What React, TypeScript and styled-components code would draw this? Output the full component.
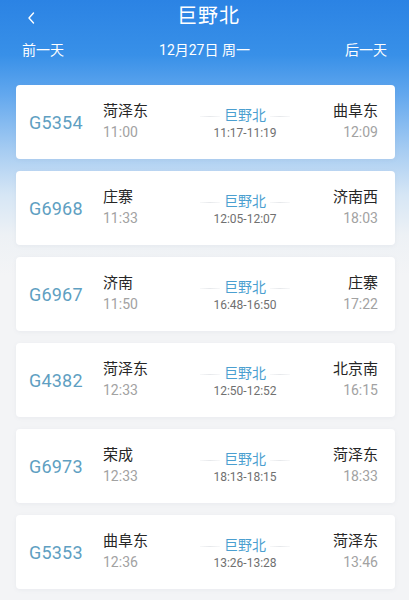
import React from "react";
import styled, { createGlobalStyle } from "styled-components";

const Global = createGlobalStyle`
  html, body { margin: 0; padding: 0; }
  body {
    width: 409px;
    min-height: 600px;
    background: #f3f4f6;
    font-family: Roboto, "Noto Sans CJK SC", sans-serif;
    -webkit-font-smoothing: antialiased;
  }
`;

const Page = styled.div`
  width: 409px;
  height: 600px;
  overflow: hidden;
  background: linear-gradient(
    180deg,
    #2b83e4 0px,
    #3890e8 55px,
    #63a8ee 95px,
    #a6ccf2 150px,
    #d6e6f5 195px,
    #edf1f5 235px,
    #f3f4f6 275px,
    #f3f4f6 100%
  );
`;

const TitleBar = styled.div`
  position: relative;
  height: 32px;
  display: flex;
  align-items: center;
  justify-content: center;
`;

const Back = styled.div`
  position: absolute;
  left: 25px;
  top: 10px;
  width: 14px;
  height: 16px;
  display: flex;
`;

const Title = styled.h1`
  margin: 0;
  padding-left: 8px;
  font-size: 20px;
  font-weight: 400;
  color: #ffffff;
  letter-spacing: 1px;
  line-height: 30px;
`;

const DateRow = styled.div`
  display: flex;
  align-items: center;
  justify-content: space-between;
  padding: 0 22px;
  height: 34px;
  font-size: 14px;
  color: #ffffff;
`;

const List = styled.div`
  display: flex;
  flex-direction: column;
  gap: 12px;
  padding: 19px 14px 0 16px;
`;

const Card = styled.div`
  height: 74px;
  background: #ffffff;
  border-radius: 4px;
  box-shadow: 0 1px 4px rgba(120, 130, 150, 0.08);
  display: grid;
  grid-template-columns: 74px 97px 90px 1fr;
  align-items: center;
  padding: 0 17px 0 13px;
`;

const Code = styled.div`
  font-size: 18px;
  color: #5f9fc2;
  letter-spacing: 0.2px;
  margin-top: 1px;
`;

const Stop = styled.div<{ $right?: boolean }>`
  display: flex;
  flex-direction: column;
  align-items: ${(p) => (p.$right ? "flex-end" : "flex-start")};
  gap: 1px;
  margin-top: -1px;
`;

const StationName = styled.div`
  font-size: 15px;
  line-height: 20px;
  color: #262626;
`;

const Time = styled.div`
  font-size: 14px;
  line-height: 20px;
  color: #a2a2a2;
`;

const Middle = styled.div`
  display: flex;
  flex-direction: column;
  align-items: center;
  margin-top: 4px;
`;

const Via = styled.div`
  display: flex;
  align-items: center;
  width: 90px;
  gap: 4px;
`;

const Line = styled.div`
  flex: 1;
  height: 1px;
  margin-top: 2px;
  background: linear-gradient(90deg, rgba(230, 232, 235, 0.3), #e6e8eb, rgba(230, 232, 235, 0.3));
`;

const ViaName = styled.div`
  font-size: 14px;
  line-height: 19px;
  color: #4b9fd0;
`;

const ViaTime = styled.div`
  font-size: 12px;
  line-height: 17px;
  color: #707070;
`;

type Train = {
  code: string;
  from: string;
  dep: string;
  stay: string;
  to: string;
  arr: string;
};

const trains: Train[] = [
  { code: "G5354", from: "菏泽东", dep: "11:00", stay: "11:17-11:19", to: "曲阜东", arr: "12:09" },
  { code: "G6968", from: "庄寨", dep: "11:33", stay: "12:05-12:07", to: "济南西", arr: "18:03" },
  { code: "G6967", from: "济南", dep: "11:50", stay: "16:48-16:50", to: "庄寨", arr: "17:22" },
  { code: "G4382", from: "菏泽东", dep: "12:33", stay: "12:50-12:52", to: "北京南", arr: "16:15" },
  { code: "G6973", from: "荣成", dep: "12:33", stay: "18:13-18:15", to: "菏泽东", arr: "18:33" },
  { code: "G5353", from: "曲阜东", dep: "12:36", stay: "13:26-13:28", to: "菏泽东", arr: "13:46" },
];

export default function App() {
  return (
    <Page>
      <Global />
      <TitleBar>
        <Back>
          <svg width="14" height="16" viewBox="0 0 14 16" fill="none">
            <path d="M8.5 3 L4 8 L8.5 13" stroke="#ffffff" strokeWidth="1.4" strokeLinecap="round" strokeLinejoin="round" />
          </svg>
        </Back>
        <Title>巨野北</Title>
      </TitleBar>
      <DateRow>
        <span>前一天</span>
        <span>12月27日 周一</span>
        <span>后一天</span>
      </DateRow>
      <List>
        {trains.map((t) => (
          <Card key={t.code}>
            <Code>{t.code}</Code>
            <Stop>
              <StationName>{t.from}</StationName>
              <Time>{t.dep}</Time>
            </Stop>
            <Middle>
              <Via>
                <Line />
                <ViaName>巨野北</ViaName>
                <Line />
              </Via>
              <ViaTime>{t.stay}</ViaTime>
            </Middle>
            <Stop $right>
              <StationName>{t.to}</StationName>
              <Time>{t.arr}</Time>
            </Stop>
          </Card>
        ))}
      </List>
    </Page>
  );
}
